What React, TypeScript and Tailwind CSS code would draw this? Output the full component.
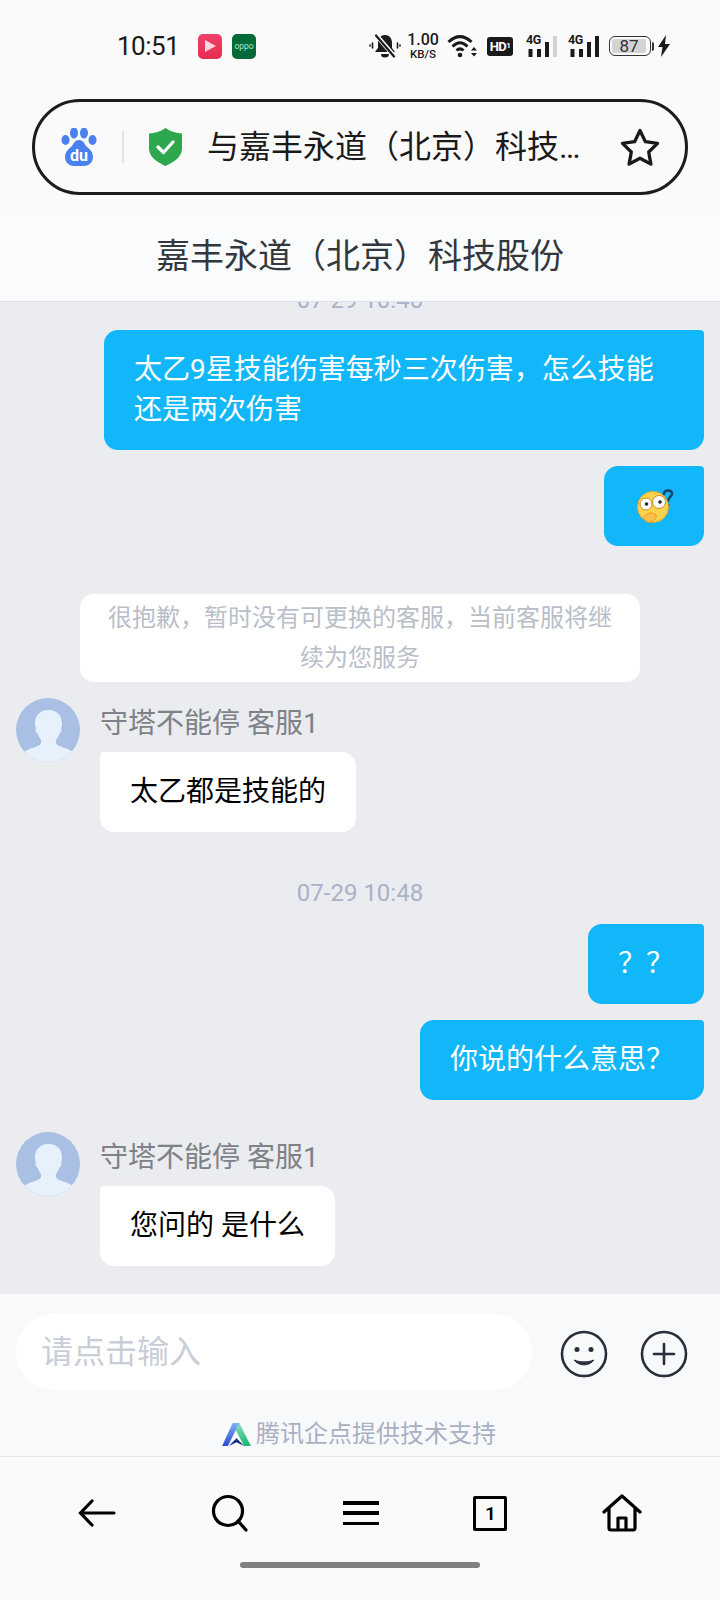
const font = "font-['Roboto','Noto_Sans_CJK_SC',sans-serif]";

function Avatar({ id }: { id: string }) {
  return (
    <svg width="64" height="64" viewBox="0 0 64 64" className="shrink-0">
      <defs>
        <clipPath id={id}>
          <circle cx="32" cy="32" r="32" />
        </clipPath>
      </defs>
      <g clipPath={`url(#${id})`}>
        <rect width="64" height="64" fill="#a9bfe3" />
        <path
          d="M32 12c-8 0-13 5.500-13 13 0 2 .3 4 1 5.500-.6 0-.8 1-.5 2 .4 1.500 1 2.500 2 3 1 3 2.500 5 3.500 6.500.5 2 0 4-1.500 5-3 2-9 3-14 6-3 2-5 4-7 7v6h60v-6c-2-3-4-5-7-7-5-3-11-4-14-6-1.500-1-2-3-1.500-5 1-1.500 2.500-3.500 3.500-6.500 1-.5 1.600-1.500 2-3 .3-1-.1-2-.5-2 .7-1.500 1-3.500 1-5.500 0-7.500-5-13-13-13z"
          fill="#e6f1fb"
        />
      </g>
    </svg>
  );
}

function AgentMessage({ id, text, className }: { id: string; text: string; className?: string }) {
  return (
    <div className={`flex pl-4 ${className ?? ''}`}>
      <Avatar id={id} />
      <div className="ml-5 flex flex-col items-start">
        <div className="mt-[6px] text-[28px] leading-[40px] text-[#7e8288]">守塔不能停 客服1</div>
        <div className="mt-2 rounded-[14px] rounded-tl-[4px] bg-white px-[30px] py-5 text-[28px] leading-[40px] text-black">
          {text}
        </div>
      </div>
    </div>
  );
}

function UserBubble({ children, className }: { children: React.ReactNode; className?: string }) {
  return (
    <div className={`mr-4 self-end rounded-[14px] rounded-tr-[4px] bg-[#12b7f9] px-[30px] py-5 text-[28px] leading-[40px] text-white ${className ?? ''}`}>
      {children}
    </div>
  );
}

function EmojiThinking() {
  return (
    <svg width="42" height="40" viewBox="0 0 42 40">
      <path d="M28 7c0-4 7-5 8-1 1 3-4 4-4 8" fill="none" stroke="#17445f" strokeWidth="2.500" strokeLinecap="round" />
      <circle cx="32" cy="18" r="1.500" fill="#17445f" />
      <circle cx="17" cy="20" r="15.500" fill="#fcd34d" stroke="#eaa52b" strokeWidth="1" />
      <circle cx="10" cy="17" r="6" fill="#fff" stroke="#d18c22" strokeWidth="1" />
      <circle cx="10.500" cy="17" r="1.800" fill="#222" />
      <circle cx="23" cy="15" r="6.500" fill="#fff" stroke="#d18c22" strokeWidth="1" />
      <circle cx="24" cy="15" r="1.800" fill="#222" />
      <path d="M7 31c3-5 9-6 12-4 3 2 0 7-4 8-3 1-6-1-8-4z" fill="#fbbf4a" stroke="#e39a2a" strokeWidth="1" />
    </svg>
  );
}

function Signal({ dim, className }: { dim?: boolean; className?: string }) {
  return (
    <div className={`relative h-[21px] w-[31px] ${className ?? ''}`}>
      <span className="absolute top-[-2px] left-0 text-[12.500px] leading-none font-bold tracking-[-0.5px]">4G</span>
      <svg width="31" height="21" viewBox="0 0 31 21" className="block">
        <rect x="2.500" y="13" width="4" height="8" fill="#1a1a1a" />
        <rect x="11" y="13" width="4" height="8" fill="#1a1a1a" />
        <rect x="19" y="6" width="4" height="15" fill="#1a1a1a" />
        <rect x="27" y="0" width="4" height="21" fill={dim ? '#d2d2d2' : '#1a1a1a'} />
      </svg>
    </div>
  );
}

function StatusBar() {
  return (
    <div className="relative flex h-[92px] items-center pl-[117px] text-[#1a1a1a]">
      <span className="w-[81px] text-[26px] leading-none tracking-[-0.5px]">10:51</span>
      <div className="flex h-[25px] w-[24px] items-center justify-center rounded-[5px] bg-gradient-to-b from-[#f0406a] to-[#e62c50]">
        <svg width="13" height="14" viewBox="0 0 13 14">
          <path d="M1 1l11 6-11 6z" fill="#ffd5de" />
        </svg>
      </div>
      <div className="ml-[10px] flex h-[25px] w-[24px] items-center justify-center rounded-[5px] bg-[#056a37] text-[8.500px] leading-none text-[#a9e6c3]">oppo</div>

      <div className="ml-auto flex items-center pr-[49px]">
        <svg width="32" height="24" viewBox="0 0 32 24" className="mr-[6px]">
          <path d="M16 1c-5 0-7 4-7 8v5l-3 4h20l-3-4V9c0-4-2-8-7-8z" fill="#1a1a1a" />
          <path d="M12 20a4 3.500 0 0 0 8 0z" fill="#1a1a1a" />
          <path d="M8 2l17 20" stroke="#fafafa" strokeWidth="4.500" />
          <path d="M7 1.500l18 21" stroke="#1a1a1a" strokeWidth="2.200" strokeLinecap="round" />
          <path d="M3.500 9v5M1 11v1M28.500 9v5M31 11v1" stroke="#1a1a1a" strokeWidth="1.600" strokeLinecap="round" />
        </svg>
        <div className="flex w-[32px] flex-col items-center">
          <span className="text-[16px] leading-[14px] font-medium">1.00</span>
          <span className="mt-[2px] text-[11.500px] leading-[11px] font-medium">KB/S</span>
        </div>
        <svg width="31" height="24" viewBox="0 0 31 24" className="ml-[8px]">
          <path d="M1.500 8C9 1 17 1 24.500 8M5.500 12.500C11 7.500 15 7.500 20.500 12.500M9.500 16.500c2.500-2.300 4.500-2.300 7 0" fill="none" stroke="#1a1a1a" strokeWidth="3" />
          <circle cx="13" cy="21" r="2.300" fill="#1a1a1a" />
          <path d="M24 16.500l3-3.500 3 3.500zM24 19l3 3.500 3-3.500z" fill="#1a1a1a" />
        </svg>
        <div className="ml-[9px] flex h-[19px] w-[26px] items-center justify-center rounded-[3px] bg-[#1a1a1a] text-[13px] leading-none font-bold tracking-[-0.5px] text-white">
          HD<span className="text-[8px]">1</span>
        </div>
        <Signal dim className="ml-[13px]" />
        <Signal className="ml-[11px]" />
        <div className="ml-[10px] flex items-center">
          <div className="flex h-[20px] w-[42px] items-center rounded-[6px] border-[1.500px] border-[#333] p-[2px]">
            <div className="flex h-full w-[34px] items-center justify-center rounded-[2px] bg-[#d4d4d4] text-[17px] leading-none text-[#333]">87</div>
          </div>
          <div className="ml-[1px] h-[9px] w-[2px] rounded-r-sm bg-[#333]" />
        </div>
        <svg width="14" height="22" viewBox="0 0 14 22" className="ml-[3px]">
          <path d="M9 0L1 12h4.500L4 22l9-13H8z" fill="#1a1a1a" />
        </svg>
      </div>
    </div>
  );
}

function AddressBar() {
  return (
    <div className="mx-[32px] mt-[7px] flex h-[96px] items-center rounded-full border-[3.500px] border-[#1c1c1c] pl-[26px] pr-[25px]">
      <svg width="36" height="38" viewBox="0 0 36 38" className="shrink-0">
        <ellipse cx="4.500" cy="12" rx="4" ry="5" fill="#4a80f0" />
        <ellipse cx="13" cy="5" rx="4" ry="5.500" fill="#4a80f0" />
        <ellipse cx="23" cy="5" rx="4" ry="5.500" fill="#4a80f0" />
        <ellipse cx="31.500" cy="12" rx="4" ry="5" fill="#4a80f0" />
        <path d="M18 12c-4 0-5 3-7 6-2 2-7 5-7 11 0 6 5 9 9 9h10c4 0 9-3 9-9 0-6-5-9-7-11-2-3-3-6-7-6z" fill="#4a80f0" />
        <text x="18" y="33" textAnchor="middle" fontSize="16" fontWeight="700" fill="#fff" fontFamily="Roboto">du</text>
      </svg>
      <div className="ml-[25px] h-[32px] w-[2px] shrink-0 bg-[#e2e2e2]" />
      <svg width="33" height="38" viewBox="0 0 33 38" className="ml-[25px] shrink-0">
        <path d="M16.500 0C22 4 27 5 33 5.500v15C33 29 25 34 16.500 38 8 34 0 29 0 20.500v-15C6 5 11 4 16.500 0z" fill="#2ea84f" />
        <path d="M9 19l5.500 5.500L24 14" fill="none" stroke="#fff" strokeWidth="3.200" strokeLinecap="round" strokeLinejoin="round" />
      </svg>
      <div className="ml-[25px] w-[380px] truncate text-[32px] leading-[48px] text-[#1a1a1a]">
        与嘉丰永道（北京）科技股份有限公司
      </div>
      <svg width="40" height="38" viewBox="0 0 40 38" className="ml-auto shrink-0">
        <path d="M20 2.500l5.400 11.200 12.100 1.700-8.800 8.600 2.200 12.100L20 30.200 9.100 36.100l2.200-12.100-8.800-8.600 12.100-1.700z" fill="none" stroke="#1a1a1a" strokeWidth="3.300" strokeLinejoin="round" />
      </svg>
    </div>
  );
}

function BottomNav() {
  return (
    <div className="flex h-[144px] flex-col border-t border-[#e3e5e8] bg-[#fafafa]">
      <div className="mt-[37px] flex h-[38px] items-center justify-around px-[31px]">
        <svg width="38" height="28" viewBox="0 0 38 28">
          <path d="M14 2L2.500 14 14 26M3 14h33" fill="none" stroke="#000" strokeWidth="3.200" strokeLinecap="round" />
        </svg>
        <svg width="38" height="38" viewBox="0 0 38 38">
          <circle cx="17" cy="17" r="14.500" fill="none" stroke="#000" strokeWidth="3.200" />
          <path d="M27 27l8 9" stroke="#000" strokeWidth="3.200" strokeLinecap="round" />
        </svg>
        <div className="flex h-[24px] w-[36px] flex-col justify-between">
          <div className="h-[3.500px] bg-black" />
          <div className="h-[3.500px] bg-black" />
          <div className="h-[3.500px] bg-black" />
        </div>
        <div className="flex h-[35px] w-[34px] items-center justify-center rounded-[2px] border-[3px] border-black text-[19px] leading-none font-semibold text-black">1</div>
        <svg width="40" height="38" viewBox="0 0 40 38">
          <path d="M2 18L20 2l18 16M7 14v20c0 1.500 1 2 2 2h22c1 0 2-.5 2-2V14M16 36V24h8v12" fill="none" stroke="#000" strokeWidth="3.200" strokeLinecap="round" strokeLinejoin="round" />
        </svg>
      </div>
      <div className="mx-auto mt-[30px] h-[6px] w-[240px] rounded-full bg-[#808080]" />
    </div>
  );
}

export default function App() {
  return (
    <div className={`flex h-[1600px] w-[720px] flex-col overflow-hidden bg-[#fafafa] ${font}`}>
      <StatusBar />
      <AddressBar />
      <div className="mt-[18px] flex h-[89px] items-center justify-center border-b border-[#dfe1e8] bg-[#fafbfc] pb-[2px] text-[34px] leading-[48px] text-[#33373e]">
        嘉丰永道（北京）科技股份
      </div>

      <div className="flex flex-1 flex-col overflow-hidden bg-[#eaecf0]">
        {/* earlier messages are scrolled under the header */}
        <div className="mt-[-22px] text-center text-[24px] leading-[40px] text-[#a9b2c8]">07-29 10:40</div>
        <UserBubble className="mt-[10px] w-[600px]">太乙9星技能伤害每秒三次伤害，怎么技能还是两次伤害</UserBubble>
        <div className="mt-4 mr-4 flex h-[80px] w-[100px] items-center justify-center self-end rounded-[14px] rounded-tr-[4px] bg-[#12b7f9] pt-[2px] pl-[6px]">
          <EmojiThinking />
        </div>
        <div className="mx-auto mt-[48px] w-[560px] rounded-[14px] bg-white px-6 py-[4px] text-center text-[24px] leading-[40px] text-[#b9bec9]">
          很抱歉，暂时没有可更换的客服，当前客服将继续为您服务
        </div>
        <AgentMessage id="avatar-a" className="mt-4" text="太乙都是技能的" />
        <div className="mt-[41px] text-center text-[24px] leading-[40px] text-[#a9b2c8]">07-29 10:48</div>
        <UserBubble className="mt-[11px]">？？</UserBubble>
        <UserBubble className="mt-4">你说的什么意思？</UserBubble>
        <AgentMessage id="avatar-b" className="mt-8" text="您问的 是什么" />
      </div>

      <div className="flex h-[162px] shrink-0 flex-col bg-[#f8f9fb]">
        <div className="mt-5 flex items-center pl-4">
          <div className="flex h-[76px] w-[516px] items-center rounded-[38px] bg-white pl-[25px] text-[32px] leading-[44px] text-[#c9cdd8]">请点击输入</div>
          <svg width="48" height="48" viewBox="0 0 48 48" className="ml-[28px] mt-[3px]">
            <circle cx="24" cy="24" r="22" fill="none" stroke="#2b2f3b" strokeWidth="2.600" />
            <circle cx="17" cy="19.500" r="2.500" fill="#2b2f3b" />
            <circle cx="31" cy="19.500" r="2.500" fill="#2b2f3b" />
            <path d="M14 30c5 6.500 15 6.500 20 0-6 2.500-14 2.500-20 0z" fill="#2b2f3b" stroke="#2b2f3b" strokeWidth="1" strokeLinejoin="round" />
          </svg>
          <svg width="48" height="48" viewBox="0 0 48 48" className="ml-[32px] mt-[3px]">
            <circle cx="24" cy="24" r="22" fill="none" stroke="#2b2f3b" strokeWidth="2.600" />
            <path d="M24 14v20M14 24h20" stroke="#2b2f3b" strokeWidth="2.600" strokeLinecap="round" />
          </svg>
        </div>
        <div className="mt-[28px] flex items-center justify-center pr-[2px]">
          <svg width="29" height="23" viewBox="0 0 30 24">
            <defs>
              <linearGradient id="qd-left" x1="0" y1="0" x2="0" y2="1">
                <stop offset="0" stopColor="#7fb0f0" />
                <stop offset="1" stopColor="#2e4bd6" />
              </linearGradient>
              <linearGradient id="qd-right" x1="0" y1="0" x2="0" y2="1">
                <stop offset="0" stopColor="#8fdcc0" />
                <stop offset="1" stopColor="#14b86e" />
              </linearGradient>
            </defs>
            <path d="M11 0h7L6 24H0z" fill="url(#qd-left)" />
            <path d="M18 0l12 24h-7L14 7z" fill="url(#qd-right)" />
            <path d="M7 24l8-8 8 8-8-4z" fill="#142a7c" />
          </svg>
          <span className="ml-[5px] text-[24px] leading-[32px] text-[#aab0c4]">腾讯企点提供技术支持</span>
        </div>
      </div>

      <BottomNav />
    </div>
  );
}
